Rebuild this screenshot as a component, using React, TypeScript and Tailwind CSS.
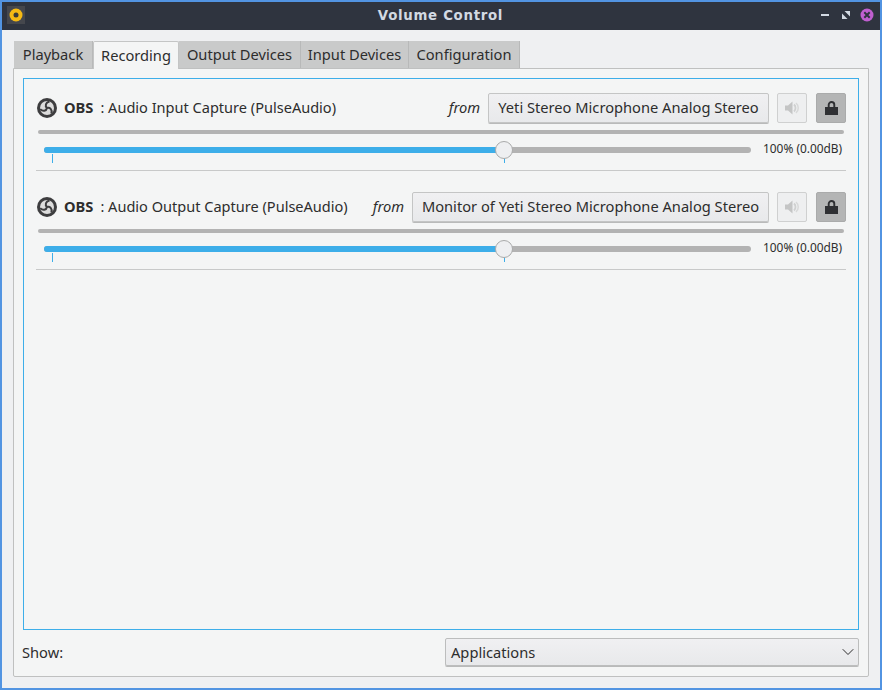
import { ChevronDown } from "lucide-react";

const tabs = [
  { label: "Playback", width: "w-[79px]" },
  { label: "Recording", width: "w-[86px]", active: true },
  { label: "Output Devices", width: "w-[122px]" },
  { label: "Input Devices", width: "w-[108px]" },
  { label: "Configuration", width: "w-[111px]" },
];

const streams = [
  { name: ": Audio Input Capture (PulseAudio)", device: "Yeti Stereo Microphone Analog Stereo", buttonWidth: "w-[281px]", pad: "pt-[14px]" },
  { name: ": Audio Output Capture (PulseAudio)", device: "Monitor of Yeti Stereo Microphone Analog Stereo", buttonWidth: "w-[357px]", pad: "pt-[21px]" },
];

function ObsIcon() {
  return (
    <svg width="20" height="20" viewBox="0 0 20 20" className="shrink-0">
      <circle cx="10" cy="10" r="10" fill="#3d3d3f" />
      <circle cx="10" cy="10" r="7" fill="#dcdcdc" />
      <g fill="none" stroke="#3d3d3f" strokeWidth="2">
        <path d="M10 10C7.800 8 8.500 4.500 12.500 3.500" />
        <path d="M10 10C7.800 8 8.500 4.500 12.500 3.500" transform="rotate(120 10 10)" />
        <path d="M10 10C7.800 8 8.500 4.500 12.500 3.500" transform="rotate(240 10 10)" />
      </g>
    </svg>
  );
}

function SpeakerIcon() {
  return (
    <svg width="16" height="16" viewBox="0 0 16 16">
      <path d="M1 5.500h3L8.500 1.500v13L4 10.500H1z" fill="#c4c5c5" />
      <path d="M10 4.500c2 1.800 2 5.200 0 7" fill="none" stroke="#cfd0d0" strokeWidth="1.800" />
      <path d="M12 3c3 2.500 3 7.500 0 10" fill="none" stroke="#d8d9d9" strokeWidth="1.500" />
    </svg>
  );
}

function LockIcon() {
  return (
    <svg width="13" height="14" viewBox="0 0 13 14">
      <path d="M0 6h13v8H0z" fill="#2f3033" />
      <path d="M3.700 6.500V3.800a2.800 2.800 0 0 1 5.600 0v2.700" fill="none" stroke="#2f3033" strokeWidth="1.900" />
    </svg>
  );
}

function Stream({ name, device, buttonWidth, pad }: (typeof streams)[number]) {
  return (
    <div className={`${pad} border-b border-[#c8c9c9]`}>
      <div className="flex h-[30px] items-center">
        <div className="ml-px">
          <ObsIcon />
        </div>
        <span className="mb-[2px] ml-[7px] font-bold">OBS</span>
        <span className="mb-[2px] ml-[7px] text-[14.55px]">{name}</span>
        <span className="mb-[2px] ml-auto mr-[8px] italic">from</span>
        <button className={`${buttonWidth} mr-[8px] h-[30px] rounded-[2px] border border-[#c4c5c5] bg-gradient-to-b from-[#f0f0f2] to-[#e8e9eb] pb-[2px] text-center text-[#2d2d2d] shadow-[0_1px_0_#b9baba]`}>
          {device}
        </button>
        <button className="mr-[9px] flex h-[30px] w-[30px] items-center justify-center rounded-[2px] border border-[#cfd0d0] bg-[#eeeff0]">
          <SpeakerIcon />
        </button>
        <button className="flex h-[30px] w-[30px] items-center justify-center rounded-[2px] border border-[#aaabab] bg-[#b4b5b5]">
          <LockIcon />
        </button>
      </div>
      <div className="mx-[2px] mt-[7px] h-[4px] rounded-full bg-[#b3b3b3]" />
      <div className="relative mt-[13px] flex h-[23px] items-start pl-[8px]">
        <div className="relative h-[6px] w-[707px] rounded-full bg-[#b3b3b3]">
          <div className="h-[6px] w-[460px] rounded-full bg-[#3daee9]" />
          <div className="absolute left-[8px] top-[7px] h-[9px] w-px bg-[#3daee9]" />
          <div className="absolute left-[460px] top-[11px] h-[5px] w-px bg-[#3daee9]" />
          <div className="absolute left-[451px] top-[-6px] h-[18px] w-[18px] rounded-full border border-[#a9aaaa] bg-[#eeeff1]" />
        </div>
        <span className="ml-[12px] mt-[-7px] text-[11.9px] leading-[16px]">100% (0.00dB)</span>
      </div>
    </div>
  );
}

export default function App() {
  return (
    <div className="flex h-[690px] w-[882px] flex-col border-2 border-[#5294e2] font-['Noto_Sans',sans-serif] text-[14.67px] leading-[20px] text-[#2d2d2d]">
      <div className="flex h-[28px] shrink-0 items-center bg-[#2f343f] pl-[5px] pr-[6px]">
        <div className="w-[60px]">
          <div className="mb-[2px] flex h-[18px] w-[18px] items-center justify-center bg-[#45474d]">
            <svg width="14" height="14" viewBox="0 0 14 14">
              <circle cx="7" cy="7" r="6.500" fill="#f5b914" />
              <circle cx="7" cy="7" r="2.500" fill="#3a3a38" />
            </svg>
          </div>
        </div>
        <div className="flex-1 text-center font-['DejaVu_Sans',sans-serif] text-[13.33px] font-bold tracking-[0.7px] text-[#d3dae3]">
          Volume Control
        </div>
        <div className="flex w-[60px] items-center justify-end pb-[3px]">
          <div className="h-[2px] w-[8px] bg-[#d3dae3]" />
          <svg width="8" height="8" viewBox="0 0 8 8" className="ml-[13px]">
            <path d="M2.500 0H8v5.500z" fill="#d3dae3" />
            <path d="M0 2.500V8h5.500z" fill="#d3dae3" />
          </svg>
          <svg width="14" height="14" viewBox="0 0 14 14" className="ml-[10px]">
            <circle cx="7" cy="7" r="6.500" fill="#c05fd0" />
            <path d="M4.300 4.300l5.400 5.400M9.700 4.300l-5.400 5.400" stroke="#2f343f" strokeWidth="2" />
          </svg>
        </div>
      </div>

      <div className="flex flex-1 flex-col bg-[#eff0f2] p-[11px]">
        <div className="flex h-[28px] shrink-0 pl-px">
          {tabs.map((tab) =>
            tab.active ? (
              <div
                key={tab.label}
                className={`${tab.width} relative z-10 flex h-[28px] items-center justify-center rounded-t-[2px] border border-b-0 border-[#c4c5c5] bg-[#f4f5f5] pb-[2px]`}
              >
                {tab.label}
              </div>
            ) : (
              <div
                key={tab.label}
                className={`${tab.width} flex h-[27px] items-center justify-center border-r border-[#b8b9b9] bg-[#c9caca] pb-[1px] text-[#2d2d2d]`}
              >
                {tab.label}
              </div>
            ),
          )}
        </div>
        <div className="mt-[-1px] flex flex-1 flex-col rounded-b-[2px] border border-[#bfc0c0] bg-[#f4f5f5] p-[9px]">
          <div className="h-[552px] shrink-0 border border-[#3daee9] px-[12px]">
            {streams.map((s) => (
              <Stream key={s.device} {...s} />
            ))}
          </div>
          <div className="mt-[8px] flex items-center">
            <span className="ml-[-1px]">Show:</span>
            <div className="ml-auto flex h-[28px] w-[414px] items-center justify-between rounded-[2px] border border-[#bcbdbd] bg-gradient-to-b from-[#f0f0f2] to-[#e8e9eb] pl-[5px] shadow-[0_1px_0_#b9baba]">
              <span>Applications</span>
              <ChevronDown size={20} strokeWidth={1.2} />
            </div>
          </div>
        </div>
      </div>
    </div>
  );
}
